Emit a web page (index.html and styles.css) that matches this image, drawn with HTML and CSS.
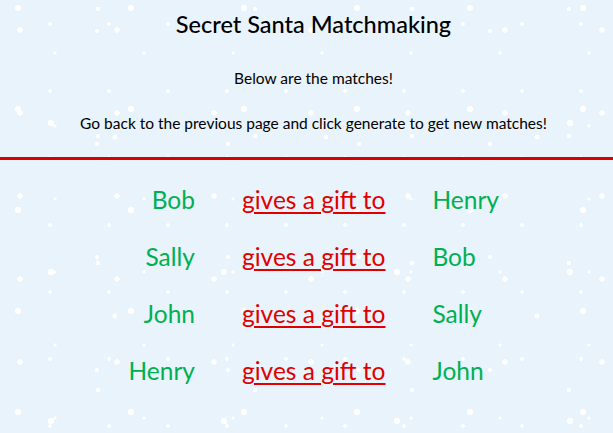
FILE: index.html
```html
<!DOCTYPE html>
<html lang="en">
<head>
<meta charset="utf-8">
<title>Secret Santa Matchmaking</title>
<link rel="stylesheet" href="styles.css">
</head>
<body>
<header class="intro">
  <h1 class="title">Secret Santa Matchmaking</h1>
  <p class="note">Below are the matches!</p>
  <p class="note">Go back to the previous page and click generate to get new matches!</p>
</header>
<hr class="divider">
<main class="matches">
  <span class="giver">Bob</span><span class="verb">gives a gift to</span><span class="receiver">Henry</span>
  <span class="giver">Sally</span><span class="verb">gives a gift to</span><span class="receiver">Bob</span>
  <span class="giver">John</span><span class="verb">gives a gift to</span><span class="receiver">Sally</span>
  <span class="giver">Henry</span><span class="verb">gives a gift to</span><span class="receiver">John</span>
</main>
</body>
</html>
```
FILE: styles.css
```css
html, body {
  margin: 0;
  padding: 0;
}
body {
  min-height: 433px;
  font-family: "Lato", "Open Sans", sans-serif;
  color: #000;
  background-color: #e8f3fc;
  background-image:
    radial-gradient(circle at 20px 30px, #fff 0 2.5px, transparent 3px),
    radial-gradient(circle at 60px 12px, #fff 0 1.8px, transparent 2.3px),
    radial-gradient(circle at 40px 70px, #fff 0 3px, transparent 3.5px),
    radial-gradient(circle at 80px 50px, #fff 0 1.5px, transparent 2px),
    radial-gradient(circle at 15px 95px, #fff 0 2px, transparent 2.5px),
    radial-gradient(circle at 110px 40px, #fff 0 2.2px, transparent 2.7px),
    radial-gradient(circle at 33px 21px, #fff 0 1.6px, transparent 2.1px),
    radial-gradient(circle at 70px 80px, #fff 0 2.8px, transparent 3.3px),
    radial-gradient(circle at 12px 55px, #fff 0 1.3px, transparent 1.8px);
  background-size: 97px 83px, 131px 113px, 173px 149px, 71px 61px, 157px 127px, 211px 179px, 59px 67px, 113px 101px, 89px 73px;
  background-position: 0 0, 37px 19px, 11px 53px, 29px 7px, 83px 41px, 5px 97px, 17px 3px, 61px 29px, 43px 71px;
}
.intro {
  display: flex;
  flex-direction: column;
  align-items: center;
  padding: 9px 0 0 14px;
}
.title {
  margin: 0;
  font-size: 23.5px;
  font-weight: 500;
  line-height: 30px;
}
.note {
  margin: 29px 0 0;
  font-size: 15.5px;
  line-height: 20px;
}
.note + .note {
  margin-top: 25px;
}
.divider {
  margin: 24px 0 0;
  border: 0;
  height: 3px;
  background: #d90000;
}
.matches {
  display: grid;
  grid-template-columns: 195px auto 1fr;
  column-gap: 47px;
  row-gap: 27px;
  padding-top: 25px;
  font-size: 24.5px;
  line-height: 30px;
}
.giver {
  text-align: right;
  color: #00b050;
}
.receiver {
  color: #00b050;
}
.verb {
  color: #e00000;
  text-decoration: underline;
  text-decoration-thickness: 2px;
  text-underline-offset: 3px;
}
```
